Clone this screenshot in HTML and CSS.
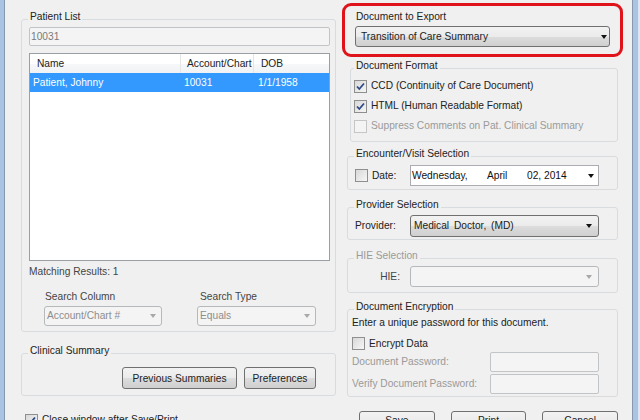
FILE: index.html
```html
<!DOCTYPE html>
<html lang="en">
<head>
    <meta charset="UTF-8">
    <meta name="viewport" content="width=device-width, initial-scale=1.0">
    <title>Export Clinical Summary</title>
    <link rel="stylesheet" href="styles.css">
</head>
<body>
    <div class="window">
        <div class="frame-left"></div>

        <div class="dialog">
            <!-- left column -->
            <div class="col-left">
                <fieldset class="group patient-group">
                    <legend>Patient List</legend>
                    <div class="textbox disabled">10031</div>
                    <div class="listview">
                        <div class="lv-header">
                            <div class="lv-cell">Name</div>
                            <div class="lv-cell">Account/Chart #</div>
                            <div class="lv-cell">DOB</div>
                        </div>
                        <div class="lv-row selected">
                            <div class="lv-cell">Patient, Johnny</div>
                            <div class="lv-cell">10031</div>
                            <div class="lv-cell">1/1/1958</div>
                        </div>
                    </div>
                    <div class="matching">Matching Results: 1</div>
                    <div class="search-row">
                        <div class="search-field column-field">
                            <div class="field-label">Search Column</div>
                            <div class="combo disabled"><span>Account/Chart #</span><i class="arrow"></i></div>
                        </div>
                        <div class="search-field type-field">
                            <div class="field-label">Search Type</div>
                            <div class="combo disabled"><span>Equals</span><i class="arrow"></i></div>
                        </div>
                    </div>
                </fieldset>

                <fieldset class="group clinical-group">
                    <legend>Clinical Summary</legend>
                    <div class="btn-row">
                        <button class="btn prev-btn">Previous Summaries</button>
                        <button class="btn pref-btn">Preferences</button>
                    </div>
                </fieldset>

                <div class="check-row close-row">
                    <span class="checkbox checked"><svg viewBox="0 0 11 11"><path d="M2 5.5 L4.3 8 L9 2.5"/></svg></span>
                    <span>Close window after Save/Print</span>
                </div>
            </div>

            <!-- right column -->
            <div class="col-right">
                <div class="export-box">
                    <div class="export-label">Document to Export</div>
                    <div class="combo export-combo"><span>Transition of Care Summary</span><i class="arrow"></i></div>
                </div>

                <fieldset class="group format-group">
                    <legend>Document Format</legend>
                    <div class="check-row">
                        <span class="checkbox checked"><svg viewBox="0 0 11 11"><path d="M2 5.5 L4.3 8 L9 2.5"/></svg></span>
                        <span>CCD (Continuity of Care Document)</span>
                    </div>
                    <div class="check-row">
                        <span class="checkbox checked"><svg viewBox="0 0 11 11"><path d="M2 5.5 L4.3 8 L9 2.5"/></svg></span>
                        <span>HTML (Human Readable Format)</span>
                    </div>
                    <div class="check-row disabled">
                        <span class="checkbox"></span>
                        <span>Suppress Comments on Pat. Clinical Summary</span>
                    </div>
                </fieldset>

                <fieldset class="group encounter-group">
                    <legend>Encounter/Visit Selection</legend>
                    <div class="field-row">
                        <span class="checkbox"></span>
                        <span class="date-label">Date:</span>
                        <div class="datepicker">
                            <span class="dp-day">Wednesday,</span>
                            <span class="dp-month">April</span>
                            <span class="dp-year">02, 2014</span>
                            <i class="arrow"></i>
                        </div>
                    </div>
                </fieldset>

                <fieldset class="group provider-group">
                    <legend>Provider Selection</legend>
                    <div class="field-row">
                        <span class="row-label">Provider:</span>
                        <div class="combo wide-combo"><span class="provider-name">Medical Doctor, (MD)</span><i class="arrow"></i></div>
                    </div>
                </fieldset>

                <fieldset class="group hie-group disabled">
                    <legend>HIE Selection</legend>
                    <div class="field-row">
                        <span class="row-label hie-label">HIE:</span>
                        <div class="combo wide-combo disabled"><span></span><i class="arrow"></i></div>
                    </div>
                </fieldset>

                <fieldset class="group encrypt-group">
                    <legend>Document Encryption</legend>
                    <div class="encrypt-note">Enter a unique password for this document.</div>
                    <div class="check-row encrypt-check">
                        <span class="checkbox"></span>
                        <span>Encrypt Data</span>
                    </div>
                    <div class="pw-row">
                        <span class="muted">Document Password:</span>
                        <div class="pw-input"></div>
                    </div>
                    <div class="pw-row">
                        <span class="muted">Verify Document Password:</span>
                        <div class="pw-input"></div>
                    </div>
                </fieldset>

                <div class="dialog-buttons">
                    <button class="btn">Save</button>
                    <button class="btn">Print</button>
                    <button class="btn">Cancel</button>
                </div>
            </div>
        </div>

        <div class="frame-right"></div>
    </div>
</body>
</html>
```

FILE: styles.css
```css
/* window */
body { margin: 0; width: 640px; height: 420px; overflow: hidden; font-family: "Liberation Sans", Arial, sans-serif; font-size: 10.2px; line-height: 12px; color: #222; background: #f0f0f0; }
.window { display: flex; height: 420px; }
.frame-left { width: 4px; background: #aac3e2; border-right: 1px solid #8799b0; }
.frame-right { width: 5px; background: #aac3e2; border-left: 1px solid #8799b0; border-right: 2px solid #dce7f4; }
.dialog { flex: 1; display: flex; gap: 11px; padding: 0 14px 0 16px; background: #f0f0f0; }
.col-left { width: 315px; padding-top: 11px; display: flex; flex-direction: column; }
.col-right { width: 271px; padding-top: 3px; display: flex; flex-direction: column; }
.col-left > *, .col-right > * { flex: none; }

/* group boxes */
.group { margin: 0; padding: 0 18px 5px 7px; border: 1px solid #d8dcdf; border-radius: 3px; min-width: 0; }
.group legend { padding: 0 2px 4px; margin-left: -1px; line-height: 12px; }
.group.disabled legend, .muted, .check-row.disabled { color: #9a9a9a; }

/* patient list */
.patient-group { padding: 0 5px 5px 7px; }
.textbox { height: 19px; box-sizing: border-box; border: 1px solid #c2c5c8; border-radius: 2px; background: #f4f4f4; padding: 0 1px; display: flex; align-items: center; }
.textbox.disabled { color: #7a7a7a; }
.listview { margin-top: 7px; height: 208px; box-sizing: border-box; border: 1px solid #9a9ea5; background: #fff; }
.lv-header, .lv-row { display: grid; grid-template-columns: 151px 73px 1fr; height: 19px; align-items: center; }
.lv-header { background: linear-gradient(#ffffff 0, #ffffff 50%, #f7f8fa 50%, #f1f2f4 100%); }
.lv-header .lv-cell { height: 19px; display: flex; align-items: center; white-space: nowrap; overflow: hidden; border-right: 1px solid #e3e5e8; box-sizing: border-box; }
.lv-header .lv-cell:nth-child(1) { padding-left: 7px; }
.lv-header .lv-cell:nth-child(2) { padding-left: 6px; padding-right: 7px; }
.lv-header .lv-cell:nth-child(3) { padding-left: 7px; border-right: none; }
.lv-row .lv-cell { white-space: nowrap; overflow: hidden; }
.lv-row .lv-cell:nth-child(1) { padding-left: 3px; }
.lv-row .lv-cell:nth-child(2) { padding-left: 3px; }
.lv-row .lv-cell:nth-child(3) { padding-left: 4px; }
.lv-row.selected { background: #3399ff; color: #fff; }
.matching { margin-top: 5px; color: #444; }
.search-row { display: flex; gap: 35px; padding-left: 15px; margin-top: 13px; }
.search-field .field-label { padding-left: 1px; margin-bottom: 3px; color: #444; }
.column-field { width: 118px; }
.type-field { width: 119px; }
.type-field .field-label { padding-left: 3px; }

/* combos */
.combo { height: 20px; box-sizing: border-box; border: 1px solid #707070; border-radius: 3px; background: linear-gradient(#f2f2f2 0, #ebebeb 50%, #dddddd 50%, #cfcfcf 100%); display: flex; align-items: center; padding: 0 6px 0 5px; white-space: nowrap; }
.combo .arrow, .datepicker .arrow { margin-left: auto; width: 0; height: 0; border-left: 3.5px solid transparent; border-right: 3.5px solid transparent; border-top: 4px solid #111; }
.combo.disabled { border-color: #b5b9bc; background: #f4f4f4; color: #8d8d8d; padding-left: 2px; }
.combo.disabled .arrow { border-top-color: #a8a8a8; }
.search-field .combo { padding-right: 5px; }

/* export */
.export-box { margin: 0 -5px; height: 54px; box-sizing: border-box; border: 3px solid #e0131a; border-radius: 9px; padding: 5px 10px 0; }
.export-label { padding-left: 1px; margin-bottom: 3px; }
.export-combo { height: 21px; padding-right: 2px; }

/* document format */
.format-group { margin: 3px 0 0 3px; padding: 0 10px 5px 3px; }
.format-group legend { margin-left: 0; }
.check-row { display: flex; align-items: center; gap: 4px; height: 20px; }
.checkbox { width: 13px; height: 13px; box-sizing: border-box; border: 1px solid #8e8f8f; background: linear-gradient(135deg, #d8d8d8, #f6f6f6); display: inline-flex; align-items: center; justify-content: center; flex: none; }
.checkbox svg { width: 11px; height: 11px; }
.checkbox path { fill: none; stroke: #2d4a87; stroke-width: 1.8; }
.check-row.disabled .checkbox { border-color: #c6c6c6; background: #f4f4f4; }

/* encounter / provider / hie */
.encounter-group { margin-top: 6px; padding-bottom: 3px; }
.provider-group { margin-top: 9px; padding-bottom: 2px; }
.hie-group { margin-top: 10px; }
.field-row { display: flex; align-items: center; }
.encounter-group .field-row { margin-top: 1px; }
.date-label { margin-left: 4px; }
.datepicker { margin-left: auto; width: 189px; height: 21px; box-sizing: border-box; border: 1px solid #abadb3; background: #fff; display: flex; align-items: center; padding: 0 4px 0 1px; color: #111; }
.dp-day { width: 75px; }
.dp-month { width: 40px; }
.wide-combo { margin-left: auto; width: 189px; height: 22px; padding-left: 3px; }
.hie-group .wide-combo { height: 21px; }
.provider-name { word-spacing: 2px; }
.hie-label { width: 45px; text-align: right; color: #444; }

/* encryption */
.encrypt-group { margin-top: 8px; padding: 0 18px 2px 4px; }
.encrypt-group legend { margin-left: 2px; }
.encrypt-check { margin-top: 6px; height: 17px; }
.pw-row { display: flex; align-items: center; justify-content: space-between; height: 20px; }
.pw-row + .pw-row { margin-top: 2px; }
.pw-input { width: 109px; height: 20px; box-sizing: border-box; border: 1px solid #c2c5c8; border-radius: 2px; background: #f4f4f4; }

/* buttons */
.btn { height: 22px; box-sizing: border-box; border: 1px solid #707070; border-radius: 3px; background: linear-gradient(#f2f2f2 0, #ebebeb 50%, #dddddd 50%, #cfcfcf 100%); font-family: inherit; font-size: 10.2px; color: #222; padding: 0; cursor: pointer; }
.clinical-group { margin-top: 13px; padding: 6px 19px 6px 7px; }
.btn-row { display: flex; justify-content: flex-end; gap: 7px; }
.prev-btn { width: 115px; }
.pref-btn { width: 72px; }
.close-row { margin-top: 16px; padding-left: 4px; height: 16px; }
.dialog-buttons { display: flex; gap: 16px; padding-left: 12px; margin-top: 14px; }
.dialog-buttons .btn { width: 76px; padding-bottom: 4px; }
```
